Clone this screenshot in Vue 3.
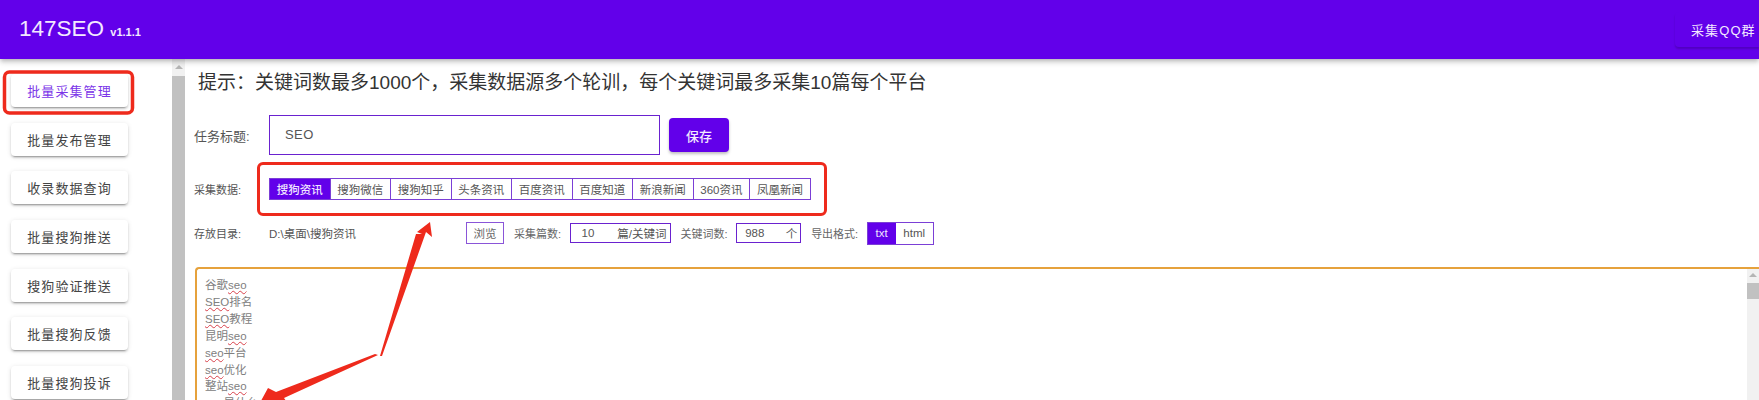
<script setup>
import { ref } from 'vue'

const menus = ['批量采集管理', '批量发布管理', '收录数据查询', '批量搜狗推送', '搜狗验证推送', '批量搜狗反馈', '批量搜狗投诉']
const sources = ['搜狗资讯', '搜狗微信', '搜狗知乎', '头条资讯', '百度资讯', '百度知道', '新浪新闻', '360资讯', '凤凰新闻']
const activeMenu = ref(0)
const activeSource = ref(0)
const format = ref('txt')

// bad = the part the browser spellcheck underlines
const keywords = [
  { pre: '谷歌', bad: 'seo', post: '' },
  { pre: '', bad: 'SEO', post: '排名' },
  { pre: '', bad: 'SEO', post: '教程' },
  { pre: '昆明', bad: 'seo', post: '' },
  { pre: '', bad: 'seo', post: '平台' },
  { pre: '', bad: 'seo', post: '优化' },
  { pre: '整站', bad: 'seo', post: '' },
  { pre: '', bad: 'seo', post: '是什么' }
]
</script>

<template>
  <div class="page">
    <header class="topbar">
      <div class="brand">147SEO <small>v1.1.1</small></div>
      <button class="qq-btn">采集QQ群</button>
    </header>

    <div class="body">
      <aside class="sidebar">
        <button
          v-for="(m, i) in menus"
          :key="m"
          class="menu-btn"
          :class="{ active: activeMenu === i }"
          @click="activeMenu = i"
        >
          {{ m }}
        </button>
      </aside>

      <div class="scrollbar">
        <span class="arrow"></span>
        <div class="thumb"></div>
      </div>

      <main class="content">
        <h1 class="hint">提示&#xFF1A;关键词数最多1000个&#xFF0C;采集数据源多个轮训&#xFF0C;每个关键词最多采集10篇每个平台</h1>

        <div class="row title-row">
          <label class="label big">任务标题:</label>
          <div class="title-input">SEO</div>
          <button class="save-btn">保存</button>
        </div>

        <div class="row source-row">
          <label class="label">采集数据:</label>
          <div class="tabs">
            <button
              v-for="(s, i) in sources"
              :key="s"
              class="tab"
              :class="{ on: activeSource === i }"
              @click="activeSource = i"
            >
              {{ s }}
            </button>
          </div>
        </div>

        <div class="row path-row">
          <label class="label">存放目录:</label>
          <span class="path">D:\桌面\搜狗资讯</span>
          <button class="browse">浏览</button>
          <label class="label-s first">采集篇数:</label>
          <div class="num-input wide"><span>10</span><span>篇/关键词</span></div>
          <label class="label-s">关键词数:</label>
          <div class="num-input narrow"><span>988</span><span>个</span></div>
          <label class="label-s">导出格式:</label>
          <div class="formats">
            <button class="fmt txt" :class="{ on: format === 'txt' }" @click="format = 'txt'">txt</button>
            <button class="fmt html" :class="{ on: format === 'html' }" @click="format = 'html'">html</button>
          </div>
        </div>

        <div class="keywords">
          <div class="kw-text">
            <div v-for="(k, i) in keywords" :key="i">{{ k.pre }}<span class="typo">{{ k.bad }}</span>{{ k.post }}</div>
          </div>
          <div class="kw-scroll">
            <span class="arrow small"></span>
            <div class="kw-thumb"></div>
          </div>
        </div>
      </main>
    </div>

    <!-- hand drawn annotations on top of the screenshot -->
    <svg class="marks" width="1759" height="400" viewBox="0 0 1759 400">
      <rect x="4.5" y="72" width="128" height="41" rx="5" fill="none" stroke="#ee2a1c" stroke-width="3.5" />
      <polygon points="380,356 416,234 422,234 417,232 430,222 432,237 426,232 382,356" fill="#ee2a1c" />
      <polygon points="375,354 378,355 284,398 291,408 256,410 268,388 276,392" fill="#ee2a1c" />
    </svg>
  </div>
</template>

<style>
html, body {
  margin: 0;
  background: #fff;
}
</style>

<style scoped>
.page {
  position: relative;
  width: 1759px;
  height: 400px;
  overflow: hidden;
  background: #fff;
  font-family: "Liberation Sans", "Noto Sans CJK SC", sans-serif;
  color: #444;
}
button {
  font-family: inherit;
  cursor: pointer;
}

.topbar {
  position: relative;
  z-index: 2;
  height: 59px;
  box-sizing: border-box;
  padding: 0 0 0 19px;
  display: flex;
  justify-content: space-between;
  align-items: flex-start;
  background: #6200ea;
  box-shadow: 0 2px 4px -1px rgba(0, 0, 0, .2), 0 4px 5px rgba(0, 0, 0, .14);
}
.brand {
  margin-top: 15px;
  font-size: 22.5px;
  line-height: 28px;
  color: #f3e9ff;
}
.brand small {
  font-size: 11px;
  font-weight: 700;
}
.qq-btn {
  width: 84px;
  height: 35px;
  margin-top: 12px;
  padding: 0 0 0 16px;
  text-align: left;
  border: none;
  border-radius: 4px 0 0 4px;
  background: #6200ea;
  color: #f3e9ff;
  font-size: 13px;
  letter-spacing: 1.1px;
  white-space: nowrap;
  box-shadow: 0 2px 2px rgba(0, 0, 0, .18);
}

.body {
  display: flex;
  height: 341px;
}

.sidebar {
  width: 172px;
  flex: none;
  box-sizing: border-box;
  padding: 15px 0 0 11px;
  display: flex;
  flex-direction: column;
  align-items: flex-start;
  gap: 15.7px;
}
.menu-btn {
  flex: none;
  width: 117px;
  height: 33px;
  padding: 0;
  border: none;
  border-radius: 4px;
  background: #fff;
  color: #444;
  font-size: 13px;
  letter-spacing: 1.1px;
  box-shadow: 0 3px 1px -2px rgba(0, 0, 0, .2), 0 2px 2px rgba(0, 0, 0, .14), 0 1px 5px rgba(0, 0, 0, .12);
}
.menu-btn.active {
  color: #7b35e8;
}

.scrollbar {
  width: 13px;
  flex: none;
  display: flex;
  flex-direction: column;
  align-items: center;
  background: #f1f1f1;
}
.arrow {
  width: 0;
  height: 0;
  margin-top: 6px;
  border-left: 4px solid transparent;
  border-right: 4px solid transparent;
  border-bottom: 4px solid #b5b5b5;
}
.thumb {
  width: 100%;
  flex: 1;
  margin-top: 7px;
  background: #c1c1c1;
}

.content {
  flex: 1;
  min-width: 0;
  box-sizing: border-box;
  padding: 11px 0 0 9px;
}
.hint {
  margin: 0 0 0 4px;
  font-size: 19px;
  font-weight: 400;
  line-height: 26px;
  color: #333;
  white-space: nowrap;
}
.row {
  display: flex;
  align-items: center;
}
.label {
  width: 75px;
  flex: none;
  font-size: 11px;
  color: #555;
  white-space: nowrap;
}
.label.big {
  font-size: 13px;
}
.title-row {
  margin-top: 19px;
  height: 40px;
}
.title-input {
  width: 391px;
  height: 40px;
  box-sizing: border-box;
  padding-left: 15px;
  border: 1px solid #6a22cf;
  font-size: 13px;
  line-height: 38px;
  letter-spacing: .4px;
  color: #555;
}
.save-btn {
  width: 60px;
  height: 34px;
  margin-left: 9px;
  padding: 0;
  border: none;
  border-radius: 4px;
  background: #6200ea;
  color: #f3e9ff;
  font-size: 13px;
  font-weight: 500;
  box-shadow: 0 2px 3px rgba(0, 0, 0, .25);
}

.source-row {
  margin-top: 23px;
  height: 22px;
}
.tabs {
  position: relative;
  display: flex;
  height: 22px;
  border: 1px solid #7b3fd6;
  box-sizing: border-box;
}
.tabs::after {
  content: "";
  position: absolute;
  inset: -17px -17px -17px -13px;
  border: 3.5px solid #ee2a1c;
  border-radius: 6px;
  pointer-events: none;
}
.tab {
  padding: 0 6.75px;
  border: none;
  border-left: 1px solid #7b3fd6;
  background: #fff;
  color: #555;
  font-size: 11.5px;
  white-space: nowrap;
}
.tab:first-child {
  border-left: none;
}
.tab.on {
  background: #6200ea;
  color: #f0e4ff;
  font-weight: 500;
}

.path-row {
  margin-top: 22px;
  height: 22px;
}
.path {
  width: 197px;
  flex: none;
  font-size: 11.5px;
  color: #555;
}
.browse {
  width: 38px;
  height: 22px;
  padding: 0;
  border: 1px solid #8a55d8;
  background: #fff;
  color: #666;
  font-size: 11.5px;
}
.label-s {
  margin-left: 10px;
  margin-right: 8.5px;
  font-size: 11px;
  color: #666;
  white-space: nowrap;
}
.num-input {
  height: 20px;
  box-sizing: border-box;
  display: flex;
  justify-content: space-between;
  align-items: center;
  border: 1px solid #6a22cf;
  font-size: 11.5px;
  color: #555;
}
.num-input.wide {
  width: 101px;
  padding: 0 3px 0 11px;
}
.num-input.narrow {
  width: 65px;
  padding: 0 3px 0 8px;
}
.formats {
  display: flex;
  height: 23px;
  box-sizing: border-box;
  border: 1px solid #7b3fd6;
}
.fmt {
  padding: 0;
  border: none;
  background: #fff;
  color: #555;
  font-size: 11.5px;
}
.fmt.txt {
  width: 28px;
}
.fmt.html {
  width: 37px;
}
.fmt.on {
  background: #6200ea;
  color: #f0e4ff;
}

.keywords {
  display: flex;
  height: 200px;
  margin: 23px 0 0 1px;
  box-sizing: border-box;
  border: 2px solid #e6a23c;
  border-right: none;
  border-radius: 4px 0 0 0;
}
.kw-text {
  flex: 1;
  padding: 8px 0 0 8px;
  font-size: 11.5px;
  line-height: 16.9px;
  color: #808080;
}
.typo {
  text-decoration: underline wavy #d8404a 1px;
  text-underline-offset: 1px;
}
.kw-scroll {
  width: 12px;
  flex: none;
  display: flex;
  flex-direction: column;
  align-items: center;
  background: #f1f1f1;
}
.arrow.small {
  margin-top: 4px;
}
.kw-thumb {
  width: 100%;
  height: 16px;
  margin-top: 6px;
  background: #c1c1c1;
}

.marks {
  position: absolute;
  left: 0;
  top: 0;
  z-index: 3;
  pointer-events: none;
}
</style>
